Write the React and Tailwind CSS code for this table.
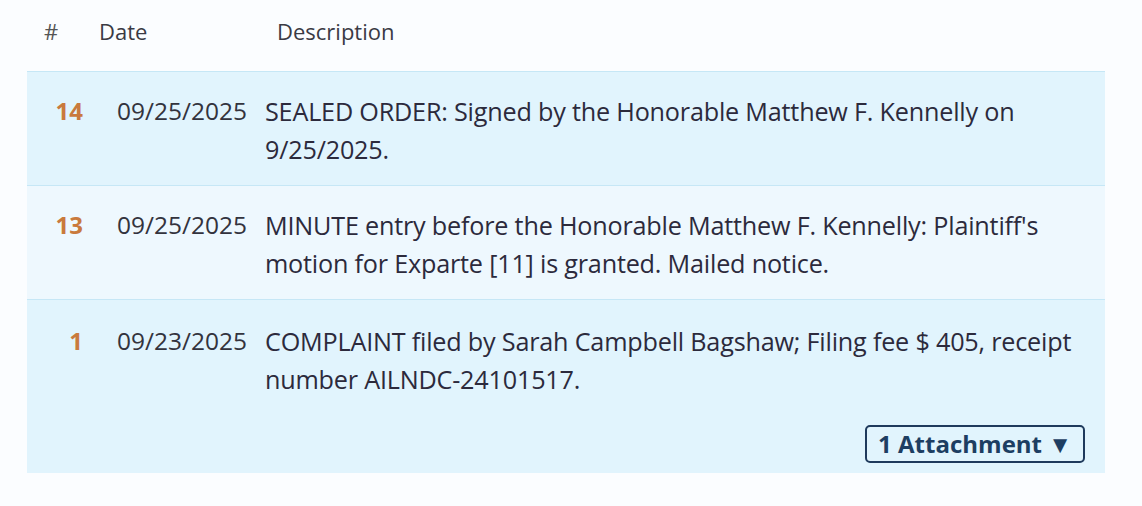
import React from 'react';

const entries = [
  {
    no: '14',
    date: '09/25/2025',
    text: 'SEALED ORDER: Signed by the Honorable Matthew F. Kennelly on 9/25/2025.',
    bg: 'bg-[#e1f4fd]',
  },
  {
    no: '13',
    date: '09/25/2025',
    text: "MINUTE entry before the Honorable Matthew F. Kennelly: Plaintiff's motion for Exparte [11] is granted. Mailed notice.",
    bg: 'bg-[#eef8fe]',
  },
  {
    no: '1',
    date: '09/23/2025',
    text: 'COMPLAINT filed by Sarah Campbell Bagshaw; Filing fee $ 405, receipt number AILNDC-24101517.',
    bg: 'bg-[#e1f4fd]',
    attachments: 1,
  },
];

export default function App() {
  return (
    <div className="w-[1142px] h-[506px] bg-[#fbfdff] font-['Open_Sans',sans-serif] overflow-hidden">
      <div className="ml-[27px] w-[1078px]">
        {/* Header */}
        <div className="h-[71px] flex items-start pt-[15px] text-[22px] leading-[32px] text-[#3a3a44]">
          <span className="w-[72px] pl-[17px] text-[#555]">#</span>
          <span className="w-[178px]">Date</span>
          <span>Description</span>
        </div>

        {/* Rows */}
        <div className="border-t border-[#c6e7f6]">
          {entries.map((e) => (
            <div
              key={e.no}
              className={`${e.bg} border-b border-[#c6e7f6] last:border-b-0 pt-[20px] pb-[17px] last:pt-[22px] last:pb-[10px]`}
            >
              <div className="grid grid-cols-[90px_148px_1fr] leading-[38px]">
                <span className="text-right pr-[34px] text-[24px] font-bold text-[#c97a3d]">{e.no}</span>
                <span className="text-[24.5px] text-[#33333d]">{e.date}</span>
                <span className="text-[25.2px] tracking-[-0.2px] text-[#2c2a3c] pr-[10px]">{e.text}</span>
              </div>
              {e.attachments && (
                <div className="flex justify-end pr-[20px] mt-[27px]">
                  <button className="border-2 border-[#1f3a5c] rounded-[5px] px-[11px] h-[38px] text-[24px] font-bold text-[#1d3e62] leading-none">
                    {e.attachments} Attachment ▼
                  </button>
                </div>
              )}
            </div>
          ))}
        </div>
      </div>
    </div>
  );
}
